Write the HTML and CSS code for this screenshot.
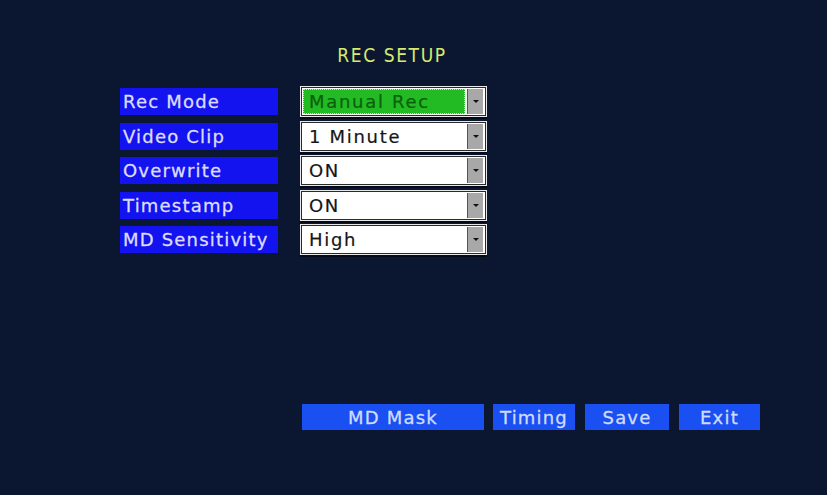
FILE: index.html
```html
<!DOCTYPE html>
<html>
<head>
<meta charset="utf-8">
<link rel="stylesheet" href="styles.css">
</head>
<body>
<div class="screen">
  <h1 class="title">REC SETUP</h1>
  <div class="form">
    <div class="label">Rec Mode</div>
    <div class="select active"><span class="value">Manual Rec</span><span class="arrow"></span></div>
    <div class="label">Video Clip</div>
    <div class="select"><span class="value">1 Minute</span><span class="arrow"></span></div>
    <div class="label">Overwrite</div>
    <div class="select"><span class="value">ON</span><span class="arrow"></span></div>
    <div class="label">Timestamp</div>
    <div class="select"><span class="value">ON</span><span class="arrow"></span></div>
    <div class="label">MD Sensitivity</div>
    <div class="select"><span class="value">High</span><span class="arrow"></span></div>
  </div>
  <div class="actions">
    <div class="btn btn-mask">MD Mask</div>
    <div class="btn btn-timing">Timing</div>
    <div class="btn btn-save">Save</div>
    <div class="btn btn-exit">Exit</div>
  </div>
</div>
</body>
</html>
```

FILE: styles.css
```css
html, body {
  margin: 0;
  padding: 0;
  background: #0b1631;
}
.screen {
  width: 827px;
  height: 495px;
  box-sizing: border-box;
  padding: 43px 0 0 120px;
  font-family: "DejaVu Sans", Verdana, sans-serif;
  background: #0b1631;
}
.title {
  margin: 0;
  width: 544px;
  text-align: center;
  font-family: "DejaVu Sans Condensed", "DejaVu Sans", sans-serif;
  font-weight: normal;
  font-size: 19px;
  letter-spacing: 1.6px;
  line-height: 24px;
  color: #d6ea6c;
}
.form {
  margin-top: 19px;
  display: grid;
  grid-template-columns: 158px 187px;
  grid-auto-rows: 31px;
  column-gap: 22px;
  row-gap: 3.5px;
}
.label {
  align-self: center;
  height: 27px;
  line-height: 28px;
  background: #1313ef;
  color: #dcdcff;
  font-size: 18px;
  letter-spacing: 1.2px;
  -webkit-text-stroke: 0.3px #dcdcff;
  padding-left: 3px;
  white-space: nowrap;
}
.select {
  display: flex;
  box-sizing: border-box;
  border: 1px solid #e8e8e8;
  box-shadow: inset 0 0 0 1px #2a2a2a, 0 2px 0 #050a18;
  background: #ffffff;
  padding: 2px 3px 2px 2px;
}
.select .value {
  flex: 1;
  padding-left: 6px;
  font-size: 18px;
  letter-spacing: 1.7px;
  line-height: 26px;
  color: #161616;
  -webkit-text-stroke: 0.2px #161616;
  white-space: nowrap;
}
.select.active .value {
  background: #22bb24;
  color: #0c600c;
  -webkit-text-stroke: 0.2px #0c600c;
  outline: 1px dotted #b8f0b8;
  outline-offset: -1px;
  margin-right: 2px;
}
.arrow {
  width: 15px;
  background: #a8a8a8;
  border-left: 1px solid #555;
  position: relative;
}
.arrow::after {
  content: "";
  position: absolute;
  left: 5px;
  top: 11px;
  border-left: 3px solid transparent;
  border-right: 3px solid transparent;
  border-top: 3px solid #111;
}
.actions {
  margin-top: 149px;
  margin-left: 182px;
  display: flex;
  gap: 9px;
}
.btn {
  height: 26px;
  line-height: 28px;
  background: #1a4ff2;
  color: #cfdcff;
  font-size: 18px;
  letter-spacing: 1.2px;
  -webkit-text-stroke: 0.3px #cfdcff;
  text-align: center;
}
.btn-mask { width: 182px; }
.btn-timing { width: 82px; }
.btn-save { width: 84px; margin-left: 1px; }
.btn-exit { width: 81px; margin-left: 1px; }
```
